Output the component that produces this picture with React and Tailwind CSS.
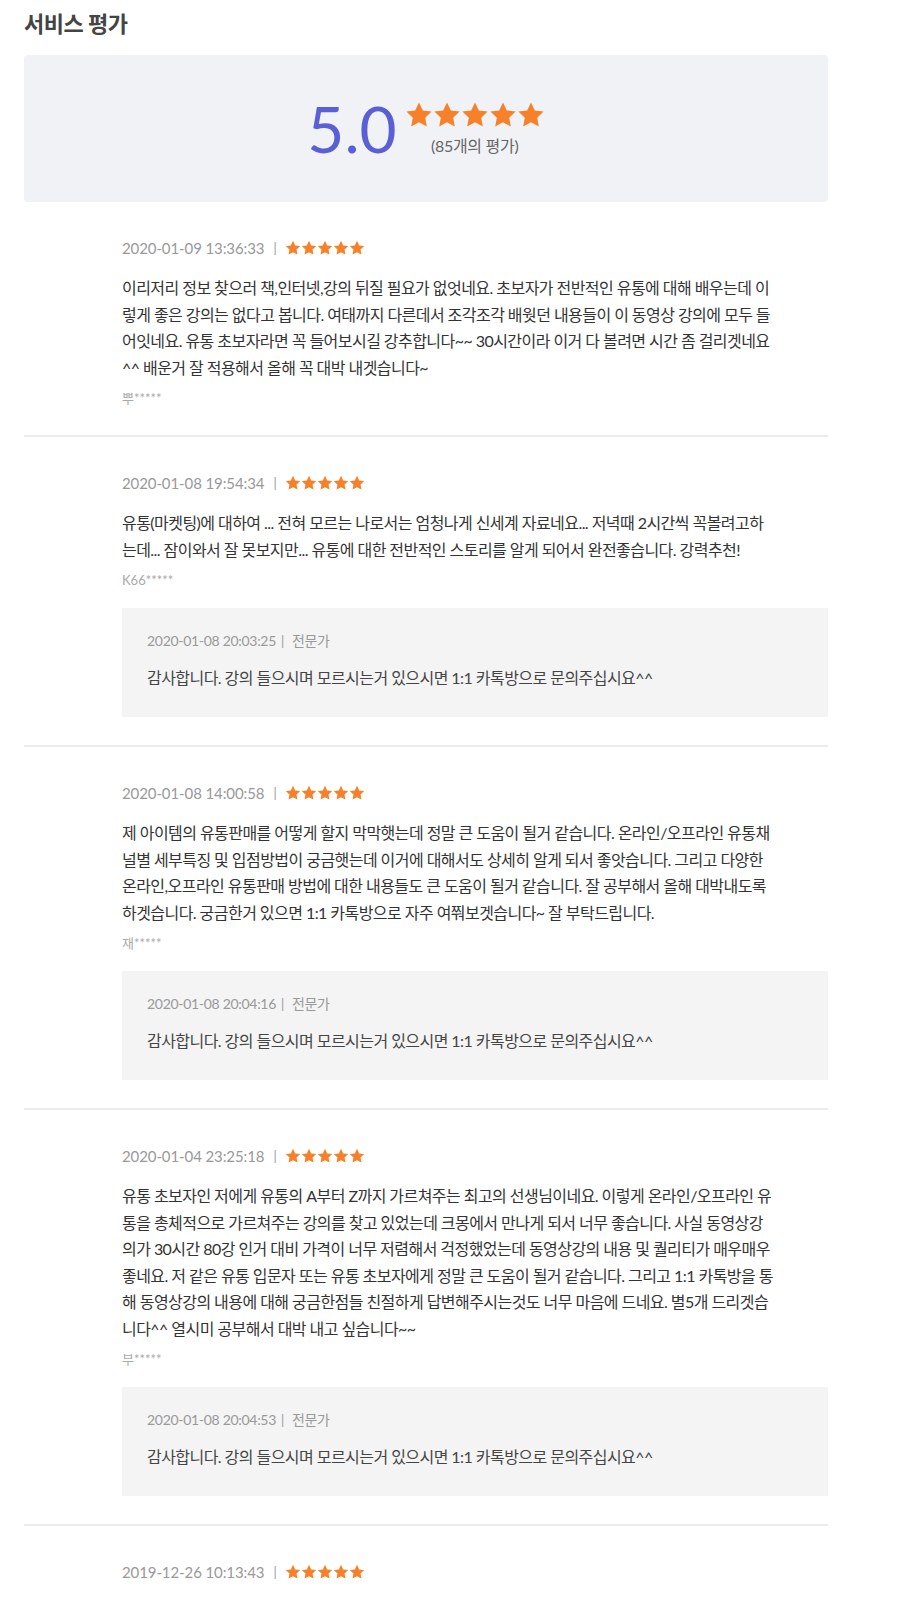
import React from "react";

const FONT = { fontFamily: 'Lato, "Noto Sans CJK KR", sans-serif' };

function Star({ size }) {
  return (
    <svg width={size} height={size} viewBox="0 0 24 24">
      <path
        d="M12 1.2l3.3 6.9 7.5 1-5.5 5.2 1.4 7.5L12 18.2l-6.7 3.6 1.4-7.5L1.2 9.1l7.5-1z"
        fill="#f7812a"
      />
    </svg>
  );
}

function Stars({ size }) {
  return (
    <div className="flex">
      {[0, 1, 2, 3, 4].map((i) => (
        <Star key={i} size={size} />
      ))}
    </div>
  );
}

const reviews = [
  {
    date: "2020-01-09 13:36:33",
    lines: [
      "이리저리 정보 찾으러 책,인터넷,강의 뒤질 필요가 없엇네요. 초보자가 전반적인 유통에 대해 배우는데 이",
      "렇게 좋은 강의는 없다고 봅니다. 여태까지 다른데서 조각조각 배웟던 내용들이 이 동영상 강의에 모두 들",
      "어잇네요. 유통 초보자라면 꼭 들어보시길 강추합니다~~ 30시간이라 이거 다 볼려면 시간 좀 걸리겟네요",
      "^^ 배운거 잘 적용해서 올해 꼭 대박 내겟습니다~",
    ],
    author: "뿌*****",
  },
  {
    date: "2020-01-08 19:54:34",
    lines: [
      "유통(마켓팅)에 대하여 ... 전혀 모르는 나로서는 엄청나게 신세계 자료네요... 저녁때 2시간씩 꼭볼려고하",
      "는데... 잠이와서 잘 못보지만... 유통에 대한 전반적인 스토리를 알게 되어서 완전좋습니다. 강력추천!",
    ],
    author: "K66*****",
    reply: "2020-01-08 20:03:25",
  },
  {
    date: "2020-01-08 14:00:58",
    lines: [
      "제 아이템의 유통판매를 어떻게 할지 막막햇는데 정말 큰 도움이 될거 같습니다. 온라인/오프라인 유통채",
      "널별 세부특징 및 입점방법이 궁금햇는데 이거에 대해서도 상세히 알게 되서 좋앗습니다. 그리고 다양한",
      "온라인,오프라인 유통판매 방법에 대한 내용들도 큰 도움이 될거 같습니다. 잘 공부해서 올해 대박내도록",
      "하겟습니다. 궁금한거 있으면 1:1 카톡방으로 자주 여쭤보겟습니다~ 잘 부탁드립니다.",
    ],
    author: "재*****",
    reply: "2020-01-08 20:04:16",
  },
  {
    date: "2020-01-04 23:25:18",
    lines: [
      "유통 초보자인 저에게 유통의 A부터 Z까지 가르쳐주는 최고의 선생님이네요. 이렇게 온라인/오프라인 유",
      "통을 총체적으로 가르쳐주는 강의를 찾고 있었는데 크몽에서 만나게 되서 너무 좋습니다. 사실 동영상강",
      "의가 30시간 80강 인거 대비 가격이 너무 저렴해서 걱정했었는데 동영상강의 내용 및 퀄리티가 매우매우",
      "좋네요. 저 같은 유통 입문자 또는 유통 초보자에게 정말 큰 도움이 될거 같습니다. 그리고 1:1 카톡방을 통",
      "해 동영상강의 내용에 대해 궁금한점들 친절하게 답변해주시는것도 너무 마음에 드네요. 별5개 드리겟습",
      "니다^^ 열시미 공부해서 대박 내고 싶습니다~~",
    ],
    author: "부*****",
    reply: "2020-01-08 20:04:53",
  },
];

function DateRow({ date }) {
  return (
    <div className="flex items-center h-[20px]">
      <span className="text-[15px] text-[#999] leading-[20px] tracking-[-0.1px]">{date}</span>
      <span className="text-[13px] text-[#999] ml-[9px] mr-[8px] leading-[20px]">|</span>
      <Stars size={16} />
    </div>
  );
}

function Review({ r }) {
  return (
    <div className="pl-[98px] pt-[36px] pb-[28px] border-b-2 border-[#ebebeb]">
      <DateRow date={r.date} />
      <div className="mt-[17px] text-[16px] leading-[26.5px] text-[#333] tracking-[-0.55px]">
        {r.lines.map((l, i) => (
          <div key={i} className="whitespace-nowrap">
            {l}
          </div>
        ))}
      </div>
      <div className="mt-[8px] text-[13px] leading-[18px] text-[#aaa]">{r.author}</div>
      {r.reply && (
        <div className="mt-[19px] bg-[#f4f4f4] pl-[25px] pt-[24px] pb-[26px]">
          <div className="flex items-center text-[14px] leading-[18px] text-[#999] tracking-[-0.3px]">
            <span>{r.reply}</span>
            <span className="ml-[5px] mr-[8px] text-[13px]">|</span>
            <span>전문가</span>
          </div>
          <div className="mt-[14px] text-[16px] leading-[27px] text-[#444] tracking-[-0.55px]">
            감사합니다. 강의 들으시며 모르시는거 있으시면 1:1 카톡방으로 문의주십시요^^
          </div>
        </div>
      )}
    </div>
  );
}

export default function App() {
  return (
    <div className="w-[900px] h-[1599px] overflow-hidden bg-white" style={FONT}>
      <div className="ml-[24px] w-[804px] pt-[8px]">
        <div className="text-[22px] leading-[32px] font-bold text-[#444] tracking-[-0.5px]">서비스 평가</div>
        <div className="mt-[15px] h-[147px] rounded-[4px] bg-[#f1f2f6] flex items-center justify-center">
          <div className="flex items-center">
            <div className="text-[64px] leading-none text-[#5b5fd5] mr-[8px]">5.0</div>
            <div className="flex flex-col items-center">
              <Stars size={28} />
              <div className="mt-[7px] text-[16px] leading-[20px] text-[#666] tracking-[-0.3px]">(85개의 평가)</div>
            </div>
          </div>
        </div>
        {reviews.map((r, i) => (
          <Review key={i} r={r} />
        ))}
        <div className="pl-[98px] pt-[36px]">
          <DateRow date="2019-12-26 10:13:43" />
        </div>
      </div>
    </div>
  );
}
